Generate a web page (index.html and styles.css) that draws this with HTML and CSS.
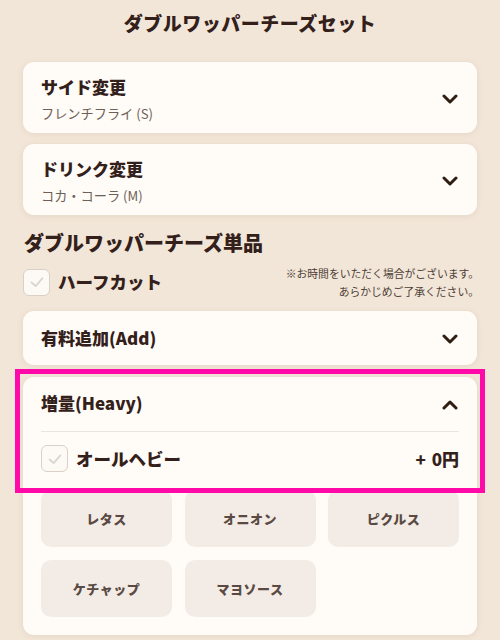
FILE: index.html
```html
<!DOCTYPE html>
<html lang="ja">
<head>
<meta charset="utf-8">
<link rel="stylesheet" href="styles.css">
</head>
<body>
<div class="page">
  <h1 class="title">ダブルワッパーチーズセット</h1>

  <div class="card select">
    <div class="select-text">
      <div class="select-title">サイド変更</div>
      <div class="select-sub">フレンチフライ (S)</div>
    </div>
    <svg class="chev" viewBox="0 0 16 10" width="16" height="10"><path d="M2 2 L8 8 L14 2" fill="none" stroke="#2f1d14" stroke-width="3" stroke-linecap="round" stroke-linejoin="round"/></svg>
  </div>

  <div class="card select">
    <div class="select-text">
      <div class="select-title">ドリンク変更</div>
      <div class="select-sub">コカ・コーラ (M)</div>
    </div>
    <svg class="chev" viewBox="0 0 16 10" width="16" height="10"><path d="M2 2 L8 8 L14 2" fill="none" stroke="#2f1d14" stroke-width="3" stroke-linecap="round" stroke-linejoin="round"/></svg>
  </div>

  <h2 class="heading">ダブルワッパーチーズ単品</h2>

  <div class="half-row">
    <label class="check-label">
      <span class="checkbox"><svg viewBox="0 0 20 20" width="18" height="18"><path d="M4 10.5 L8.5 14.5 L16 6" fill="none" stroke="#dcd6d0" stroke-width="2.2" stroke-linecap="round" stroke-linejoin="round"/></svg></span>
      <span class="check-text">ハーフカット</span>
    </label>
    <p class="note">※お時間をいただく場合がございます。<br>あらかじめご了承ください。</p>
  </div>

  <div class="card select short">
    <div class="select-title">有料追加(Add)</div>
    <svg class="chev" viewBox="0 0 16 10" width="16" height="10"><path d="M2 2 L8 8 L14 2" fill="none" stroke="#2f1d14" stroke-width="3" stroke-linecap="round" stroke-linejoin="round"/></svg>
  </div>

  <div class="card open">
    <div class="open-head">
      <div class="select-title">増量(Heavy)</div>
      <svg class="chev" viewBox="0 0 16 10" width="16" height="10"><path d="M2 8 L8 2 L14 8" fill="none" stroke="#2f1d14" stroke-width="3" stroke-linecap="round" stroke-linejoin="round"/></svg>
    </div>
    <div class="open-row">
      <label class="check-label">
        <span class="checkbox"><svg viewBox="0 0 20 20" width="18" height="18"><path d="M4 10.5 L8.5 14.5 L16 6" fill="none" stroke="#dcd6d0" stroke-width="2.2" stroke-linecap="round" stroke-linejoin="round"/></svg></span>
        <span class="check-text">オールヘビー</span>
      </label>
      <span class="price">+ 0円</span>
    </div>
    <div class="options">
      <div class="opt">レタス</div>
      <div class="opt">オニオン</div>
      <div class="opt">ピクルス</div>
      <div class="opt">ケチャップ</div>
      <div class="opt">マヨソース</div>
    </div>
  </div>

  <div class="highlight"></div>
</div>
</body>
</html>
```

FILE: styles.css
```css
* { box-sizing: border-box; }
html, body { margin: 0; padding: 0; }
body {
  background: #f2e6d8;
  font-family: "Noto Sans CJK JP", "Noto Sans", sans-serif;
  color: #33201a;
  width: 500px;
  height: 640px;
  overflow: hidden;
}
.page {
  position: relative;
  padding: 6px 23px 0 23px;
  display: flex;
  flex-direction: column;
}
.title {
  margin: 0;
  text-align: center;
  font-size: 19px;
  font-weight: 900;
  line-height: 34px;
  letter-spacing: 0.5px;
  color: #33201a;
}
.card {
  background: #fffbf6;
  border-radius: 11px;
  box-shadow: 0 1px 6px rgba(120, 90, 60, 0.10);
}
.select {
  display: flex;
  align-items: center;
  justify-content: space-between;
  padding: 10px 19px 10px 18px;
  height: 71px;
  margin-bottom: 11px;
}
.select:first-of-type { margin-top: 22px; }
.select-text { display: flex; flex-direction: column; gap: 7px; margin-top: 3px; }
.select-title {
  font-size: 17px;
  font-weight: 900;
  line-height: 22px;
  color: #33201a;
}
.select-sub {
  font-size: 13.2px;
  line-height: 18px;
  color: #6d6058;
}
.chev { display: block; margin-top: 2px; margin-right: 0; }
.heading {
  margin: 2px 0 0 1px;
  font-size: 20px;
  font-weight: 900;
  line-height: 30px;
  color: #33201a;
}
.half-row {
  display: flex;
  align-items: center;
  justify-content: space-between;
  margin-top: 4px;
  height: 40px;
}
.check-label {
  display: flex;
  align-items: center;
  gap: 8px;
}
.checkbox {
  width: 27px;
  height: 27px;
  border: 1.5px solid #d9d1c8;
  border-radius: 6px;
  background: #fdf9f4;
  display: flex;
  align-items: center;
  justify-content: center;
}
.check-text {
  font-size: 17.5px;
  font-weight: 900;
  line-height: 24px;
  color: #33201a;
}
.note {
  margin: 0;
  text-align: right;
  font-size: 10.8px;
  line-height: 18px;
  color: #4d3d35;
  padding-right: 0;
  margin-right: -2px;
}
.short {
  height: 54px;
  padding: 0 19px 0 18px;
  margin-top: 9px;
  margin-bottom: 12px;
}
.open {
  padding: 0 18px 18px 18px;
}
.open-head {
  display: flex;
  align-items: center;
  justify-content: space-between;
  height: 55px;
  padding-right: 1px;
  border-bottom: 1.5px solid #ebe5df;
}
.open-head .select-title { margin-top: -3px; }
.open-row {
  display: flex;
  align-items: center;
  justify-content: space-between;
  padding: 12px 0 0 0;
  height: 58px;
}
.open-row .check-label { align-self: flex-start; padding-top: 1px; }
.price {
  font-size: 17px;
  font-weight: 900;
  color: #33201a;
  align-self: flex-start;
  padding-top: 2px;
  word-spacing: 2px;
}
.options {
  display: grid;
  grid-template-columns: 1fr 1fr 1fr;
  column-gap: 12.5px;
  row-gap: 13px;
}
.opt {
  height: 57px;
  border-radius: 10px;
  background: #f3ece6;
  display: flex;
  align-items: center;
  justify-content: center;
  font-size: 13px;
  font-weight: 900;
  color: #5a4a43;
  letter-spacing: 0.5px;
}
.highlight {
  position: absolute;
  left: 15px;
  top: 369px;
  width: 470px;
  height: 124px;
  border: 5px solid #ff0aa8;
  pointer-events: none;
}
```
